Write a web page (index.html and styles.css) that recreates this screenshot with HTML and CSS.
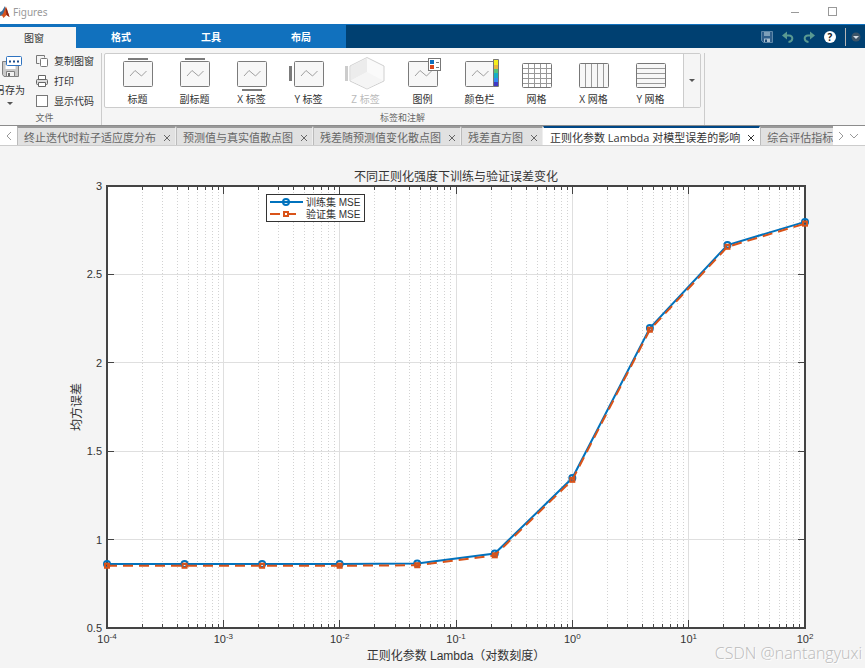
FILE: index.html
```html
<!DOCTYPE html>
<html lang="zh-CN">
<head>
  <meta charset="UTF-8">
  <meta name="viewport" content="width=device-width, initial-scale=1.0">
  <title>Figures</title>
  <link rel="stylesheet" href="styles.css">
</head>
<body>
  <!-- shared icon parts -->
  <svg class="defs" width="0" height="0">
    <symbol id="plot" viewBox="0 0 42 36">
      <rect x="6.5" y="5.5" width="29" height="25" rx="1" fill="#f7f7f7" stroke="#7b7b7b"/>
      <path d="M13 20l5-5.500 6.500 5.500 5-5" fill="none" stroke="#a0a0a0"/>
    </symbol>
    <symbol id="close" viewBox="0 0 8 8">
      <path d="M1 1l6 6M7 1l-6 6" fill="none" stroke="currentColor"/>
    </symbol>
  </svg>

  <!-- title bar -->
  <header class="title-bar">
    <svg class="logo" width="10" height="14" viewBox="0 0 10 14">
      <path d="M0 7l2-1 3-5 1 5-3 4-3 1z" fill="#3c6f9c"/>
      <path d="M0 11l3-2 3-7.500 1 3 2.500 7.500-3-2-3 3-1.500-2.500z" fill="#d9541e"/>
      <path d="M5.500 2.500l1.500 2 2.500 7.500-3-2z" fill="#8c2415"/>
    </svg>
    <h1>Figures</h1>
    <div class="window-buttons">
      <button aria-label="最小化"><svg width="10" height="10"><path d="M1 5.500h8" stroke="#999"/></svg></button>
      <button aria-label="最大化"><svg width="10" height="10"><rect x=".5" y=".5" width="8" height="8" fill="none" stroke="#999"/></svg></button>
    </div>
  </header>

  <!-- toolstrip tabs -->
  <nav class="strip">
    <button class="strip-tab selected">图窗</button>
    <button class="strip-tab">格式</button>
    <button class="strip-tab">工具</button>
    <button class="strip-tab">布局</button>
    <div class="quick">
      <button aria-label="保存">
        <svg width="12" height="12"><path d="M.5.5h11v11h-9l-2-2z" fill="#2f5f8b" stroke="#5d87a8"/><path d="M3 1h6v4H3z" fill="#7d9fb9"/><path d="M3 7.500h6V11H3z" fill="#a9bfd0"/><path d="M4 8.500h2V11H4z" fill="#1a4a76"/></svg>
      </button>
      <button aria-label="撤销">
        <svg width="12" height="12"><path d="M5 .5v8L0 4.500z" fill="#5a9a92"/><path d="M4 4.500h3c4.500 0 4.500 6-.500 6.500" fill="none" stroke="#5a9a92" stroke-width="2"/></svg>
      </button>
      <button aria-label="重做">
        <svg width="12" height="12"><path d="M7 .5v8l5-4z" fill="#5a9a92"/><path d="M8 4.500H5c-4.500 0-4.500 6 .500 6.500" fill="none" stroke="#5a9a92" stroke-width="2"/></svg>
      </button>
      <button class="help" aria-label="帮助">?</button>
      <span class="quick-line"></span>
      <button aria-label="更多">
        <svg width="10" height="10"><circle cx="5" cy="5" r="4.500" fill="#3c5468"/><path d="M2 4h6L5 7z" fill="#d5dde4"/></svg>
      </button>
    </div>
  </nav>

  <!-- ribbon -->
  <section class="ribbon">
    <div class="group file-group">
      <div class="file-tools">
        <button class="save-as">
          <svg width="30" height="24" viewBox="0 0 30 24">
            <path d="M7.500 6.500h16v15H9l-1.500-2z" fill="#c9c9c9" stroke="#808080"/>
            <path d="M10.500 10h10v4h-10z" fill="#fff"/>
            <path d="M11.500 16.500h8v5h-8z" fill="#f2f2f2" stroke="#808080"/>
            <path d="M13 18h2v3h-2z" fill="#666"/>
            <rect x="11.500" y="1.500" width="15" height="9" rx="1" fill="#fff" stroke="#2f73c0"/>
            <path d="M14 5.500h2v2h-2zM18 5.500h2v2h-2zM22 5.500h2v2h-2z" fill="#1e4e8c"/>
          </svg>
          <span>另存为</span>
          <i class="arrow"></i>
        </button>
        <div class="file-list">
          <button>
            <svg width="12" height="12"><path d="M3.500 8.500h-3v-8h8v2" fill="none" stroke="#777"/><rect x="4.500" y="3.500" width="7" height="8" rx="1" fill="#fff" stroke="#777"/></svg>
            复制图窗
          </button>
          <button>
            <svg width="12" height="12"><path d="M2.500 4V.500h7V4" fill="#fff" stroke="#666"/><rect x=".5" y="4.500" width="11" height="5" rx="1" fill="#ddd" stroke="#666"/><path d="M2.500 7.500h7v4h-7z" fill="#fff" stroke="#666"/></svg>
            打印
          </button>
          <label><input type="checkbox">显示代码</label>
        </div>
      </div>
      <div class="group-name">文件</div>
    </div>
    <div class="group label-group">
      <div class="gallery">
        <button class="tool"><svg width="42" height="36"><use href="#plot"/><path d="M11 2h20v2H11z" fill="#7b7b7b"/></svg>标题</button>
        <button class="tool"><svg width="42" height="36"><use href="#plot"/><path d="M11 2h20v2H11z" fill="#7b7b7b"/></svg>副标题</button>
        <button class="tool"><svg width="42" height="36"><use href="#plot"/><path d="M11 33h20v2H11z" fill="#7b7b7b"/></svg>X 标签</button>
        <button class="tool"><svg width="42" height="36"><use href="#plot"/><path d="M1 10h3v15H1z" fill="#7b7b7b"/></svg>Y 标签</button>
        <button class="tool" disabled>
          <svg width="42" height="36"><path d="M0 10h3v15H0z" fill="#ccc"/><path d="M22 1.500l17 8.500v15l-17 8-17-8V10z" fill="#fafafa" stroke="#d0d0d0"/><path d="M22 2v14L6 24.500V10z" fill="#ececec"/><path d="M22 16l16 8.500-16 8-16-8z" fill="#f5f5f5"/></svg>
          Z 标签
        </button>
        <button class="tool">
          <svg width="42" height="36"><use href="#plot"/><rect x="26.500" y="2.500" width="12" height="12" fill="#fff" stroke="#777"/><path d="M28 4h4v4h-4z" fill="#0d70bd"/><path d="M28 9h4v4h-4z" fill="#d9481c"/><path d="M34 6.500h3M34 11.500h3" stroke="#777"/></svg>
          图例
        </button>
        <button class="tool">
          <svg width="42" height="36"><use href="#plot"/><path d="M34 3h5v6h-5z" fill="#f5ef1c"/><path d="M34 9h5v4h-5z" fill="#e8b93c"/><path d="M34 13h5v4h-5z" fill="#52c47a"/><path d="M34 17h5v5h-5z" fill="#16afc5"/><path d="M34 22h5v4h-5z" fill="#3189f3"/><path d="M34 26h5v4h-5z" fill="#4039c4"/><path d="M34.500 3.500h5v27h-5z" fill="none" stroke="#777"/></svg>
          颜色栏
        </button>
        <button class="tool"><svg width="42" height="36"><rect x="6.500" y="7.500" width="29" height="24" rx="1" fill="#fff" stroke="#777"/><path d="M12.500 8v23M18.500 8v23M24.500 8v23M30.500 8v23M7 12.500h28M7 17.500h28M7 22.500h28M7 27.500h28" stroke="#999"/></svg>网格</button>
        <button class="tool"><svg width="42" height="36"><rect x="6.500" y="7.500" width="29" height="24" rx="1" fill="#f7f7f7" stroke="#777"/><path d="M12.500 8v23M18.500 8v23M24.500 8v23M30.500 8v23" stroke="#999"/></svg>X 网格</button>
        <button class="tool"><svg width="42" height="36"><rect x="6.500" y="7.500" width="29" height="24" rx="1" fill="#f7f7f7" stroke="#777"/><path d="M7 12.500h28M7 17.500h28M7 22.500h28M7 27.500h28" stroke="#999"/></svg>Y 网格</button>
        <button class="more" aria-label="更多工具"><i class="arrow"></i></button>
      </div>
      <div class="group-name">标签和注解</div>
    </div>
  </section>

  <!-- figure tabs -->
  <nav class="docs">
    <button class="scroll" aria-label="向左"><svg width="8" height="10"><path d="M6 1L2 5l4 4" fill="none" stroke="#999"/></svg></button>
    <div class="doc-list">
      <div class="doc"><a href="#">终止迭代时粒子适应度分布</a><button aria-label="关闭"><svg width="8" height="8"><use href="#close"/></svg></button></div>
      <div class="doc"><a href="#">预测值与真实值散点图</a><button aria-label="关闭"><svg width="8" height="8"><use href="#close"/></svg></button></div>
      <div class="doc"><a href="#">残差随预测值变化散点图</a><button aria-label="关闭"><svg width="8" height="8"><use href="#close"/></svg></button></div>
      <div class="doc"><a href="#">残差直方图</a><button aria-label="关闭"><svg width="8" height="8"><use href="#close"/></svg></button></div>
      <div class="doc active"><a href="#">正则化参数 Lambda 对模型误差的影响</a><button aria-label="关闭"><svg width="8" height="8"><use href="#close"/></svg></button></div>
      <div class="doc"><a href="#">综合评估指标</a></div>
    </div>
    <div class="doc-nav">
      <button aria-label="向右"><svg width="8" height="10"><path d="M2 1l4 4-4 4" fill="none" stroke="#999"/></svg></button>
      <button aria-label="全部图窗"><svg width="8" height="10"><path d="M0 3l4 4 4-4" fill="none" stroke="#999"/></svg></button>
    </div>
  </nav>

  <main class="figure">
    <svg id="chart" viewBox="0 0 865 522"></svg>
    <div class="watermark">CSDN @nantangyuxi</div>
  </main>

  <script src="chart.js"></script>
</body>
</html>
```
FILE: styles.css
```css
* {
  box-sizing: border-box;
}

body {
  margin: 0;
  background: #f4f4f4;
  color: #333;
  font-family: "Open Sans", "Noto Sans CJK SC", sans-serif;
  font-size: 10px;
  line-height: 14px;
}

button {
  margin: 0;
  padding: 0;
  border: none;
  background: none;
  color: inherit;
  font: inherit;
}

svg {
  display: block;
  flex: none;
}

.defs {
  position: absolute;
}

/* title bar */
.title-bar {
  display: flex;
  align-items: center;
  height: 24px;
  background: #fff;
}

.title-bar h1 {
  flex: 1;
  margin: 0 0 0 3px;
  color: #999;
  font-family: "Noto Sans", sans-serif;
  font-size: 10px;
  font-weight: normal;
}

.window-buttons {
  display: flex;
  gap: 28px;
  padding-right: 27px;
}

/* toolstrip tabs */
.strip {
  display: flex;
  height: 24px;
  background: #004071;
  border-top: 1px solid #1171be;
  color: #fff;
}

.strip-tab {
  width: 90px;
  background: #1171be;
  font-weight: bold;
}

.strip-tab.selected {
  width: 76px;
  padding-right: 8px;
  border-top: 2px solid #1171be;
  background: #f5f5f5;
  color: #333;
  font-weight: normal;
}

.quick {
  display: flex;
  align-items: center;
  gap: 9px;
  margin-left: auto;
  padding-right: 4px;
}

.help {
  width: 12px;
  height: 12px;
  border-radius: 50%;
  background: #fff;
  color: #222;
  font-weight: bold;
  line-height: 12px;
}

.quick-line {
  width: 1px;
  height: 18px;
  background: #b5b5b5;
}

.quick-line + button {
  margin-left: -4px;
}

/* ribbon */
.ribbon {
  display: flex;
  height: 78px;
  padding-top: 5px;
  background: #f5f5f5;
  border-bottom: 1px solid #8c8c8c;
}

.group {
  display: flex;
  flex-direction: column;
  border-right: 1px solid #ccc;
}

.file-group {
  width: 102px;
}

.file-tools {
  display: flex;
  height: 57px;
}

.group-name {
  margin-top: 3px;
  color: #666;
  font-size: 9px;
  text-align: center;
}

.file-group .group-name {
  padding-right: 12px;
}

.save-as {
  display: flex;
  flex-direction: column;
  align-items: center;
  width: 30px;
  margin: 2px 0 0 -5px;
}

.save-as span {
  margin: 4px 0 5px;
}

.arrow {
  border: 3px solid transparent;
  border-top-color: #555;
  border-bottom: none;
}

.file-list {
  display: flex;
  flex-direction: column;
  gap: 6px;
  margin: 1px 0 0 11px;
}

.file-list button,
.file-list label {
  display: flex;
  align-items: center;
  gap: 6px;
  white-space: nowrap;
}

.file-list input {
  appearance: none;
  width: 12px;
  height: 12px;
  margin: 0;
  border: 1px solid #777;
  background: #fff;
}

.label-group {
  padding: 0 3px 0 2px;
}

.gallery {
  display: flex;
  height: 57px;
  padding-left: 4px;
  border: 1px solid #ccc;
  border-radius: 2px;
  background: #fff;
}

.tool {
  display: flex;
  flex-direction: column;
  align-items: center;
  width: 57px;
  padding-top: 2px;
}

.tool:disabled {
  color: #bbb;
}

.more {
  display: flex;
  align-items: center;
  justify-content: center;
  width: 17px;
  margin-left: 4px;
  border-left: 1px solid #ccc;
  background: #f5f5f5;
}

/* figure tabs */
.docs {
  display: flex;
  height: 20px;
  background: #fff;
  border-bottom: 1px solid #ccc;
  font-size: 11px;
}

.scroll {
  display: flex;
  align-items: center;
  justify-content: center;
  width: 17px;
}

.doc-list {
  display: flex;
  flex: 1;
  min-width: 0;
  overflow: hidden;
}

.doc {
  display: flex;
  flex: none;
  align-items: center;
  gap: 7px;
  padding: 2px 4px 0 6px;
  border-top: 2px solid #999;
  border-left: 1px solid #bbb;
  border-right: 1px solid #eee;
  background: #e1e1e1;
  color: #666;
}

.doc a {
  color: inherit;
  text-decoration: none;
  white-space: nowrap;
}

.doc.active {
  border-color: #004785 #fff #fff;
  background: #fff;
  color: #333;
}

.doc-nav {
  display: flex;
  align-items: center;
  gap: 5px;
  padding: 0 7px 0 4px;
}

/* figure */
.figure {
  position: relative;
}

#chart {
  width: 100%;
  height: auto;
  font-family: "Liberation Sans", "Noto Sans CJK SC", sans-serif;
  fill: #333;
}

.axes {
  fill: none;
  stroke: #444;
}

.plot-area {
  fill: #fff;
}

.grid {
  stroke: #dfdfdf;
}

.minor {
  stroke: #d2d2d2;
  stroke-dasharray: 1 2;
}

.tick {
  font-size: 11px;
}

.power {
  font-size: 8px;
}

.caption {
  font-size: 12px;
  text-anchor: middle;
}

.end {
  text-anchor: end;
}

.middle {
  text-anchor: middle;
}

.legend-box {
  fill: #fff;
  stroke: #333;
}

.legend-text {
  font-size: 10px;
}

.train,
.valid {
  fill: none;
  stroke: #0072bd;
  stroke-width: 2;
}

.valid {
  stroke: #d95319;
}

.dashed {
  stroke-dasharray: 10 6;
}

.watermark {
  position: absolute;
  right: 3px;
  bottom: 6px;
  color: #bbb;
  font-family: "Open Sans", sans-serif;
  font-size: 16px;
  font-weight: 300;
  line-height: 18px;
  text-shadow: 1px 1px 0 #fff;
}
```
FILE: chart.js
```js
const chart = document.getElementById('chart');
const left = 107;
const right = 805;
const top_ = 40;
const bottom = 482;

// x values are log10(lambda), evenly spaced from -4 to 2
const train = [0.862, 0.862, 0.862, 0.862, 0.865, 0.921, 1.348, 2.197, 2.666, 2.797];
const valid = train.map((v) => v - 0.01);

const xPos = (e) => left + ((e + 4) / 6) * (right - left);
const yPos = (v) => bottom - ((v - 0.5) / 2.5) * (bottom - top_);
const points = (data) => data.map((v, i) => [xPos(-4 + (i * 6) / 9), yPos(v)]);

function add(tag, attrs, text) {
  const el = document.createElementNS('http://www.w3.org/2000/svg', tag);
  for (const key in attrs) el.setAttribute(key, attrs[key]);
  if (text !== undefined) el.textContent = text;
  chart.appendChild(el);
  return el;
}

function vline(x, y1, y2, cls) {
  const px = Math.floor(x) + 0.5;
  add('path', { d: `M${px} ${y1}V${y2}`, class: cls });
}

function hline(y, x1, x2, cls) {
  const py = Math.floor(y) + 0.5;
  add('path', { d: `M${x1} ${py}H${x2}`, class: cls });
}

add('rect', { x: left, y: top_, width: right - left, height: bottom - top_, class: 'plot-area' });

// x grid and ticks
for (let e = -4; e <= 2; e++) {
  if (e > -4 && e < 2) {
    vline(xPos(e), top_, bottom, 'grid');
    vline(xPos(e), top_, top_ + 8, 'axes');
    vline(xPos(e), bottom - 8, bottom, 'axes');
  }
  for (let n = 2; n < 10 && e < 2; n++) {
    const x = xPos(e + Math.log10(n));
    vline(x, top_, bottom, 'minor');
    vline(x, top_, top_ + 4, 'axes');
    vline(x, bottom - 4, bottom, 'axes');
  }
  const label = add('text', { x: xPos(e), y: 497, class: 'tick middle' });
  label.innerHTML = `10<tspan class="power" dy="-4">${e}</tspan>`;
}

// y grid and ticks
for (let v = 0.5; v <= 3; v += 0.5) {
  if (v > 0.5 && v < 3) {
    hline(yPos(v), left, right, 'grid');
    hline(yPos(v), left, left + 7, 'axes');
    hline(yPos(v), right - 7, right, 'axes');
  }
  add('text', { x: 102, y: yPos(v) + 4, class: 'tick end' }, v);
}

add('rect', { x: left, y: top_, width: right - left, height: bottom - top_, class: 'axes', 'stroke-width': 2 });

// series
add('polyline', { points: points(train).join(' '), class: 'train' });
points(train).forEach(([x, y]) => add('circle', { cx: x, cy: y, r: 3, class: 'train' }));
add('polyline', { points: points(valid).join(' '), class: 'valid dashed' });
points(valid).forEach(([x, y]) => add('rect', { x: x - 2, y: y - 2, width: 4, height: 4, class: 'valid' }));

// captions
add('text', { x: 456, y: 35, class: 'caption' }, '不同正则化强度下训练与验证误差变化');
add('text', { x: 456, y: 514, class: 'caption' }, '正则化参数 Lambda（对数刻度）');
add('text', { transform: 'translate(81 261) rotate(-90)', class: 'caption' }, '均方误差');

// legend
add('rect', { x: 266.5, y: 48.5, width: 98, height: 27, class: 'legend-box' });
add('path', { d: 'M270 56H303', class: 'train' });
add('circle', { cx: 286, cy: 56, r: 3, class: 'train' });
add('path', { d: 'M270 68H296', class: 'valid dashed' });
add('rect', { x: 284, y: 66, width: 4, height: 4, class: 'valid', style: 'fill: #fff' });
add('text', { x: 306, y: 60, class: 'legend-text' }, '训练集 MSE');
add('text', { x: 306, y: 72, class: 'legend-text' }, '验证集 MSE');
```
